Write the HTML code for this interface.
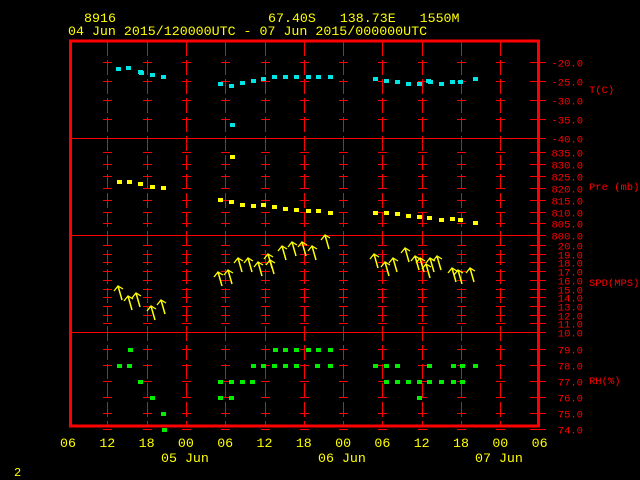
<!DOCTYPE html>
<html><head><meta charset="utf-8"><style>
html,body{margin:0;padding:0;background:#000;width:640px;height:480px;overflow:hidden}
svg{display:block}
</style></head><body>
<svg id="s" width="640" height="480" xmlns="http://www.w3.org/2000/svg" font-family="Liberation Mono, monospace">
<text x="84" y="22" fill="#ffff00" font-size="13.3">8916</text>
<text x="268" y="22" fill="#ffff00" font-size="13.3" xml:space="preserve">67.40S   138.73E   1550M</text>
<text x="68" y="35" fill="#ffff00" font-size="13.3">04 Jun 2015/120000UTC - 07 Jun 2015/000000UTC</text>
<text x="14" y="476" fill="#ffff00" font-size="12">2</text>
<text x="161" y="462" fill="#ffff00" font-size="13.3">05 Jun</text>
<text x="318" y="462" fill="#ffff00" font-size="13.3">06 Jun</text>
<text x="475" y="462" fill="#ffff00" font-size="13.3">07 Jun</text>
<text x="589" y="93" fill="#ff0000" font-size="10.5">T(C)</text>
<text x="589" y="190" fill="#ff0000" font-size="10.5">Pre (mb)</text>
<text x="589" y="286" fill="#ff0000" font-size="10.5">SPD(MPS)</text>
<text x="589" y="384" fill="#ff0000" font-size="10.5">RH(%)</text>
<g id="g"></g>
</svg>
<script>
var g=document.getElementById('g'),h='';
function L(x1,y1,x2,y2,c,w){h+='<line x1="'+x1+'" y1="'+y1+'" x2="'+x2+'" y2="'+y2+'" stroke="'+c+'" stroke-width="'+(w||1)+'"/>';}
function R(x,y,w,hh,c){h+='<rect x="'+x+'" y="'+y+'" width="'+w+'" height="'+hh+'" fill="'+c+'"/>';}
function T(x,y,s,c,fs,a){h+='<text x="'+x+'" y="'+y+'" fill="'+c+'" font-size="'+fs+'"'+(a?' text-anchor="'+a+'"':'')+'>'+s+'</text>';}
var red='#ff0000';
var ticks=[];
[-20,-25,-30,-35,-40].forEach(function(v,i){ticks.push([62+i*19,v.toFixed(1)]);});
[835,830,825,820,815,810,805,800].forEach(function(v,i){ticks.push([152+i*11.9,v.toFixed(1)]);});
for(var v=20;v>=10;v--)ticks.push([245+(20-v)*8.7,v.toFixed(1)]);
for(var v=79;v>=74;v--)ticks.push([349+(79-v)*16,v.toFixed(1)]);
var xs=[];for(var i=1;i<=11;i++)xs.push(Math.round(68+i*39.3));
xs.forEach(function(x){ if(x<536){h+='<line x1="'+(x+.5)+'" y1="41" x2="'+(x+.5)+'" y2="426" stroke="'+red+'" stroke-width="1" stroke-dasharray="15,4"/>';
 ticks.forEach(function(t){L(x-4,Math.round(t[0])+.5,x+5,Math.round(t[0])+.5,red);});}});
h+='<rect x="70.5" y="41" width="468" height="385" fill="none" stroke="'+red+'" stroke-width="3"/>';
L(70,138.5,538,138.5,red);L(70,235.5,538,235.5,red);L(70,332.5,538,332.5,red);
ticks.forEach(function(t){var y=Math.round(t[0])+.5;L(530,y,546,y,red);T(583,y+4,t[1],red,10.5,'end');});
['06','12','18','00','06','12','18','00','06','12','18','00','06'].forEach(function(s,i){T(68+i*39.3,447,s,'#ffff00',13.3,'middle');});
var cy='#00e5e5';
[[118,69],[128,68],[140,72],[141,73],[152,75],[163,77],[220,84],[231,86],[242,83],[253,81],[263,79],[274,77],[285,77],[296,77],[308,77],[318,77],[330,77],[375,79],[386,81],[397,82],[408,84],[419,84],[428,81],[430,82],[441,84],[452,82],[460,82],[475,79],[232,125]].forEach(function(p){R(p[0]-2,p[1]-2,5,4,cy);});
var ye='#ffff00';
[[119,182],[129,182],[140,184],[152,187],[163,188],[220,200],[231,202],[232,157],[242,205],[253,206],[263,205],[274,207],[285,209],[296,210],[308,211],[318,211],[330,213],[375,213],[386,213],[397,214],[408,216],[419,217],[429,218],[441,220],[452,219],[460,220],[475,223]].forEach(function(p){R(p[0]-2,p[1]-2,5,4,ye);});
var gr='#00ee00';
[[130,350],[119,366],[129,366],[140,382],[152,398],[163,414],[164,430],[220,382],[231,382],[242,382],[252,382],[220,398],[231,398],
[253,366],[263,366],[274,366],[285,366],[296,366],[317,366],[330,366],[275,350],[285,350],[296,350],[308,350],[318,350],[330,350],
[375,366],[386,366],[397,366],[429,366],[453,366],[462,366],[475,366],[386,382],[397,382],[408,382],[419,382],[429,382],[441,382],[453,382],[462,382],[419,398]].forEach(function(p){R(p[0]-2,p[1]-2,5,4,gr);});
[[118,286],[128,296],[136,293],[151,306],[161,300],[218,272],[228,270],[238,258],[248,258],[258,262],[268,254],[270,260],[282,246],[292,242],[302,242],[312,246],[325,235],[374,254],[385,262],[393,258],[405,248],[415,256],[420,258],[426,264],[430,258],[437,256],[452,268],[458,270],[470,268]].forEach(function(p){
 var x=p[0],y=p[1];
 h+='<polyline points="'+(x-4)+','+(y+5)+' '+x+','+y+' '+(x+5)+','+(y+3)+'" fill="none" stroke="'+ye+'" stroke-width="1.3"/>';
 L(x,y,x+4,y+14,ye,1.5);
});
g.innerHTML=h;
</script>
</body></html>
